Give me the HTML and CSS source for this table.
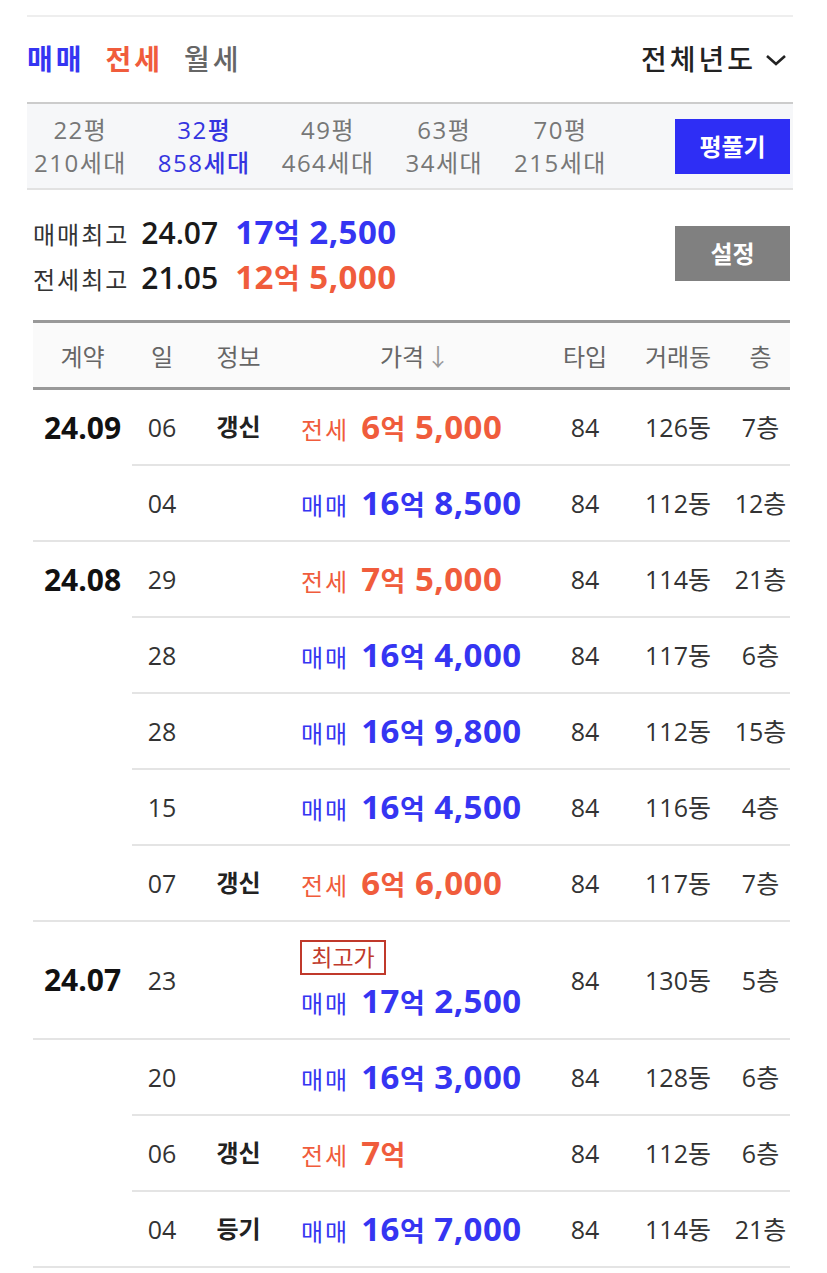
FILE: index.html
```html
<!DOCTYPE html>
<html lang="ko">
<head>
    <meta charset="UTF-8">
    <title>실거래가</title>
    <link rel="stylesheet" href="styles.css">
</head>
<body>
    <div class="wrap">
        <div class="tabs">
            <span class="tab sale">매매</span>
            <span class="tab jeonse">전세</span>
            <span class="tab monthly">월세</span>
            <span class="year">전체년도
                <svg width="22" height="14" viewBox="0 0 22 14"><polyline points="2,3 11,11 20,3" fill="none" stroke="#222" stroke-width="2.6"/></svg>
            </span>
        </div>

        <div class="pyeong-bar">
            <div class="py"><div>22평</div><div>210세대</div></div>
            <div class="py on"><div>32평</div><div>858세대</div></div>
            <div class="py"><div>49평</div><div>464세대</div></div>
            <div class="py"><div>63평</div><div>34세대</div></div>
            <div class="py"><div>70평</div><div>215세대</div></div>
            <div class="btn blue">평풀기</div>
        </div>

        <div class="best">
            <div class="best-rows">
                <div class="best-row"><span class="lbl">매매최고</span><span class="ym">24.07</span><span class="amt sale">17<span class="eok">억</span> 2,500</span></div>
                <div class="best-row"><span class="lbl">전세최고</span><span class="ym">21.05</span><span class="amt jeonse">12<span class="eok">억</span> 5,000</span></div>
            </div>
            <div class="btn gray">설정</div>
        </div>

        <table class="deals">
            <thead>
                <tr>
                    <th class="c-month">계약</th>
                    <th class="c-day">일</th>
                    <th class="c-info">정보</th>
                    <th class="c-price">가격<span class="arrow">↓</span></th>
                    <th class="c-type">타입</th>
                    <th class="c-dong">거래동</th>
                    <th class="c-floor">층</th>
                </tr>
            </thead>
            <tbody>
                <tr>
                    <td class="month cont">24.09</td><td>06</td><td class="info">갱신</td>
                    <td class="price"><span class="kind jeonse">전세</span><b class="jeonse">6<span class="eok">억</span> 5,000</b></td>
                    <td>84</td><td>126동</td><td>7층</td>
                </tr>
                <tr>
                    <td class="month"></td><td>04</td><td class="info"></td>
                    <td class="price"><span class="kind sale">매매</span><b class="sale">16<span class="eok">억</span> 8,500</b></td>
                    <td>84</td><td>112동</td><td>12층</td>
                </tr>
                <tr>
                    <td class="month cont">24.08</td><td>29</td><td class="info"></td>
                    <td class="price"><span class="kind jeonse">전세</span><b class="jeonse">7<span class="eok">억</span> 5,000</b></td>
                    <td>84</td><td>114동</td><td>21층</td>
                </tr>
                <tr>
                    <td class="month cont"></td><td>28</td><td class="info"></td>
                    <td class="price"><span class="kind sale">매매</span><b class="sale">16<span class="eok">억</span> 4,000</b></td>
                    <td>84</td><td>117동</td><td>6층</td>
                </tr>
                <tr>
                    <td class="month cont"></td><td>28</td><td class="info"></td>
                    <td class="price"><span class="kind sale">매매</span><b class="sale">16<span class="eok">억</span> 9,800</b></td>
                    <td>84</td><td>112동</td><td>15층</td>
                </tr>
                <tr>
                    <td class="month cont"></td><td>15</td><td class="info"></td>
                    <td class="price"><span class="kind sale">매매</span><b class="sale">16<span class="eok">억</span> 4,500</b></td>
                    <td>84</td><td>116동</td><td>4층</td>
                </tr>
                <tr>
                    <td class="month"></td><td>07</td><td class="info">갱신</td>
                    <td class="price"><span class="kind jeonse">전세</span><b class="jeonse">6<span class="eok">억</span> 6,000</b></td>
                    <td>84</td><td>117동</td><td>7층</td>
                </tr>
                <tr class="tall">
                    <td class="month">24.07</td><td>23</td><td class="info"></td>
                    <td class="price"><div class="badge">최고가</div><span class="kind sale">매매</span><b class="sale">17<span class="eok">억</span> 2,500</b></td>
                    <td>84</td><td>130동</td><td>5층</td>
                </tr>
                <tr>
                    <td class="month cont"></td><td>20</td><td class="info"></td>
                    <td class="price"><span class="kind sale">매매</span><b class="sale">16<span class="eok">억</span> 3,000</b></td>
                    <td>84</td><td>128동</td><td>6층</td>
                </tr>
                <tr>
                    <td class="month cont"></td><td>06</td><td class="info">갱신</td>
                    <td class="price"><span class="kind jeonse">전세</span><b class="jeonse">7<span class="eok">억</span></b></td>
                    <td>84</td><td>112동</td><td>6층</td>
                </tr>
                <tr>
                    <td class="month"></td><td>04</td><td class="info">등기</td>
                    <td class="price"><span class="kind sale">매매</span><b class="sale">16<span class="eok">억</span> 7,000</b></td>
                    <td>84</td><td>114동</td><td>21층</td>
                </tr>
            </tbody>
        </table>
    </div>
</body>
</html>
```

FILE: styles.css
```css
body {
    margin: 0;
    font-family: "Open Sans", "Noto Sans CJK KR", sans-serif;
    color: #222;
    background: #fff;
}
.wrap {
    width: 766px;
    margin: 15px 0 0 27px;
    border-top: 2px solid #eee;
}
.sale { color: #3535f2; }
.jeonse { color: #f05c3c; }
.eok { font-size: 27px; }

/* tabs */
.tabs {
    display: flex;
    align-items: center;
    height: 85px;
    font-size: 28px;
    line-height: 1.2;
}
.tab {
    margin-right: 21px;
    font-weight: bold;
    letter-spacing: 3px;
}
.tab.monthly {
    color: #666;
    font-weight: 500;
}
.year {
    margin-left: auto;
    margin-right: 6px;
    font-weight: 500;
    letter-spacing: 3px;
    display: flex;
    align-items: center;
    gap: 9px;
}

/* pyeong */
.pyeong-bar {
    display: flex;
    align-items: center;
    gap: 31px;
    height: 84px;
    padding-left: 7px;
    background: #f6f7f9;
    border-top: 2px solid #ccc;
    border-bottom: 2px solid #e2e2e2;
    font-size: 24px;
    letter-spacing: 1.5px;
    color: #777;
    text-align: center;
    line-height: 33px;
}
.py.on {
    color: #3535e0;
    font-weight: 500;
}
.btn {
    margin-left: auto;
    margin-right: 3px;
    width: 115px;
    height: 55px;
    line-height: 55px;
    text-align: center;
    color: #fff;
    font-weight: bold;
    font-size: 24px;
    letter-spacing: 0;
}
.btn.blue { background: #2e2ef5; }
.btn.gray { background: #808080; }

/* best */
.best {
    display: flex;
    align-items: center;
    padding: 15px 0 0 6px;
    height: 112px;
    box-sizing: border-box;
}
.best-row {
    display: flex;
    align-items: baseline;
    height: 45px;
    line-height: 45px;
}
.lbl {
    font-size: 24px;
    letter-spacing: 2px;
    color: #333;
    margin-right: 12px;
}
.ym {
    font-size: 30px;
    font-weight: 600;
    color: #1a1a1a;
    margin-right: 17px;
}
.amt {
    font-size: 33px;
    font-weight: bold;
    letter-spacing: 0.5px;
}
.amt .eok { font-size: 28px; }

/* table */
.deals {
    margin: 18px 3px 0 6px;
    width: 757px;
    border-collapse: collapse;
    table-layout: fixed;
}
.deals th {
    height: 64px;
    padding: 0;
    background: #fafafa;
    border-top: 3px solid #999;
    border-bottom: 3px solid #999;
    font-size: 24px;
    font-weight: normal;
    color: #666;
}
.arrow {
    color: #999;
    margin-left: 2px;
}
.c-month { width: 99px; }
.c-day { width: 60px; }
.c-info { width: 93px; }
.c-price { width: 260px; }
.c-type { width: 80px; }
.c-dong { width: 106px; }
.c-floor { width: 59px; }
.deals td {
    height: 74px;
    padding: 0;
    border-bottom: 2px solid #e4e4e4;
    text-align: center;
    font-size: 25px;
    color: #333;
    line-height: 1.2;
}
.deals td.month {
    font-size: 30px;
    font-weight: bold;
    color: #111;
}
.deals td.month.cont {
    border-bottom: none;
}
.deals td.info {
    font-size: 24px;
    font-weight: bold;
    color: #222;
}
.deals td.price {
    text-align: left;
    padding-left: 16px;
}
.kind {
    font-size: 24px;
    letter-spacing: 2px;
    margin-right: 12px;
}
.price b {
    font-size: 33px;
    letter-spacing: 0.5px;
}
.tall td {
    height: 116px;
}
.badge {
    box-sizing: border-box;
    width: 86px;
    height: 35px;
    border: 2px solid #c0392b;
    color: #c0392b;
    font-size: 23px;
    line-height: 30px;
    text-align: center;
    margin: 0 0 6px -1px;
}
```
